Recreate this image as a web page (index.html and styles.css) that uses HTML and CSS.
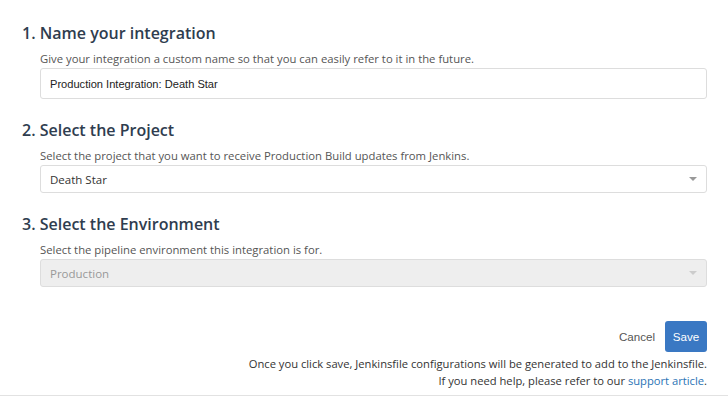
FILE: index.html
```html
<!DOCTYPE html>
<html lang="en">
<head>
    <meta charset="UTF-8">
    <meta name="viewport" content="width=device-width, initial-scale=1.0">
    <title>Jenkins Integration</title>
    <link rel="stylesheet" href="styles.css">
</head>
<body>

<div class="container">
    <!-- Passo 1 -->
    <div class="step">
        <h3>1. Name your integration</h3>
        <p class="hint">Give your integration a custom name so that you can easily refer to it in the future.</p>
        <input type="text" class="field name-field" value="Production Integration: Death Star">
    </div>

    <!-- Passo 2 -->
    <div class="step">
        <h3>2. Select the Project</h3>
        <p class="hint">Select the project that you want to receive Production Build updates from Jenkins.</p>
        <div class="select">
            <span>Death Star</span>
            <span class="caret"></span>
        </div>
    </div>

    <!-- Passo 3 -->
    <div class="step">
        <h3>3. Select the Environment</h3>
        <p class="hint">Select the pipeline environment this integration is for.</p>
        <div class="select disabled">
            <span>Production</span>
            <span class="caret"></span>
        </div>
    </div>

    <div class="actions">
        <button class="cancel-button">Cancel</button>
        <button class="save-button">Save</button>
    </div>
    <p class="footer-note">
        Once you click save, Jenkinsfile configurations will be generated to add to the Jenkinsfile.<br>
        If you need help, please refer to our <a href="#">support article</a>.
    </p>
</div>

</body>
</html>
```

FILE: styles.css
```css
body {
    font-family: "Open Sans", Arial, sans-serif;
    margin: 0;
    padding: 0;
    background-color: white;
    color: #555;
}
.container {
    box-sizing: border-box;
    height: 396px;
    padding: 22px 21px 0 22px;
    border-bottom: 1px solid #e2e2e2;
}
.step {
    margin-bottom: 20px;
}
.step h3 {
    margin: 0;
    font-size: 16px;
    font-weight: 600;
    color: #2f3d4f;
    line-height: 22px;
}
.hint {
    margin: 7px 0 1px 18px;
    font-size: 11.3px;
    line-height: 16px;
    color: #555;
}
.field {
    display: block;
    box-sizing: border-box;
    width: calc(100% - 18px);
    margin-left: 18px;
    height: 31px;
    padding: 0 9px;
    border: 1px solid #ddd;
    border-radius: 3px;
    font-family: "Liberation Sans", Arial, sans-serif;
    font-size: 11.1px;
    color: #222;
    outline: none;
}
.select {
    box-sizing: border-box;
    margin-left: 18px;
    height: 28px;
    padding: 0 9px;
    border: 1px solid #ddd;
    border-radius: 3px;
    display: flex;
    justify-content: space-between;
    align-items: center;
    font-size: 11.5px;
    color: #333;
}
.select.disabled {
    background-color: #eee;
    color: #999;
}
.caret {
    width: 0;
    height: 0;
    border-left: 4px solid transparent;
    border-right: 4px solid transparent;
    border-top: 4px solid #999;
}
.select.disabled .caret {
    border-top-color: #ccc;
}
.actions {
    display: flex;
    justify-content: flex-end;
    align-items: center;
    gap: 8px;
    margin-top: 34px;
}
.cancel-button {
    background: none;
    border: none;
    font-family: "Liberation Sans", Arial, sans-serif;
    font-size: 11.6px;
    color: #555;
    padding: 0 2px;
    cursor: pointer;
}
.save-button {
    background-color: #3a78c3;
    color: white;
    font-family: "Liberation Sans", Arial, sans-serif;
    font-size: 11.6px;
    border: none;
    border-radius: 3px;
    width: 42px;
    height: 31px;
    cursor: pointer;
}
.footer-note {
    margin: 3px 0 0;
    text-align: right;
    font-size: 11.2px;
    line-height: 17px;
    color: #333;
}
.footer-note a {
    color: #2a73b5;
    text-decoration: none;
}
```
